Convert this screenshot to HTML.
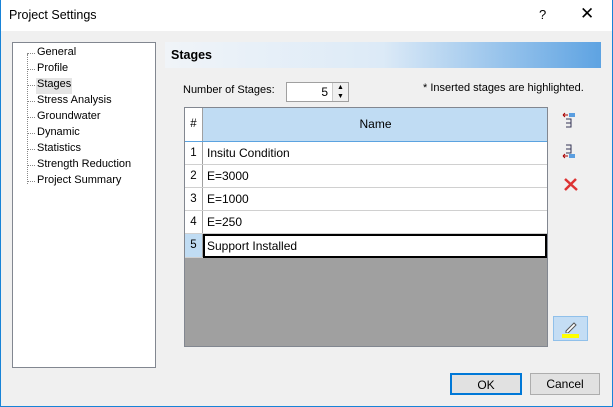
<html><head><style>
*{box-sizing:border-box}
body{margin:0;width:613px;height:407px;overflow:hidden;font-family:"Liberation Sans",sans-serif;font-size:11.5px;color:#000;background:#f0f0f0;position:relative}
.a{position:absolute}
.win{left:0;top:0;width:613px;height:407px;border:1px solid #1883d7;border-top:none}
.title{left:0;top:0;width:613px;height:31px;background:#fff;border-left:1px solid #1883d7;border-right:1px solid #1883d7}
.tree{left:12px;top:42px;width:144px;height:326px;background:#fff;border:1px solid #828790}
.ti{position:absolute;left:24px;font-size:11px}
.ti:before{content:"";position:absolute;left:-10px;top:7px;width:8px;border-top:1px dotted #888}
.tbl{left:184px;top:107px;width:364px;height:240px;background:#a0a0a0;border:1px solid #828790}
.row{position:absolute;left:0;width:362px;height:23px;border-bottom:1px solid #d0d0d0;background:#fff}
.num{position:absolute;left:0;top:0;width:18px;height:22px;border-right:1px solid #a0a0a0;text-align:center;line-height:22px;background:#fff}
.nm{position:absolute;left:22px;top:0;line-height:22px;font-size:12px}
.btn{height:22px;border:1px solid #adadad;background:#e1e1e1;text-align:center;line-height:20px;font-size:12px}
</style></head><body>
<div class="a win"></div>
<div class="a title"></div>
<div class="a" style="left:9px;top:8px;font-size:12.5px">Project Settings</div>
<div class="a" style="left:539px;top:7px;font-size:13px">?</div>
<div class="a" style="left:580px;top:4px;font-size:17px">✕</div>
<div class="a tree">
<div class="a" style="left:14px;top:11px;height:130px;border-left:1px dotted #888"></div>
<div class="ti" style="top:3px">General</div>
<div class="ti" style="top:19px">Profile</div>
<div class="a" style="left:23px;top:35px;width:36px;height:16px;background:#e5e5e5"></div>
<div class="ti" style="top:35px">Stages</div>
<div class="ti" style="top:51px">Stress Analysis</div>
<div class="ti" style="top:67px">Groundwater</div>
<div class="ti" style="top:83px">Dynamic</div>
<div class="ti" style="top:99px">Statistics</div>
<div class="ti" style="top:115px">Strength Reduction</div>
<div class="ti" style="top:131px">Project Summary</div>
</div>
<div class="a" style="left:165px;top:42px;width:436px;height:26px;background:linear-gradient(90deg,#f0f4f8 0%,#dceaf7 50%,#5ea3e2 100%)"></div>
<div class="a" style="left:171px;top:48px;font-weight:bold;font-size:12.5px">Stages</div>
<div class="a" style="left:183px;top:84px;font-size:11px">Number of Stages:</div>
<div class="a" style="left:286px;top:82px;width:63px;height:20px;border:1px solid #a0a0a0;background:#fff"><span class="a" style="right:20px;top:2px;font-size:12px">5</span><div class="a" style="right:0;top:0;width:16px;height:18px;background:#f0f0f0;border-left:1px solid #ccc;font-size:7px;text-align:center;line-height:9px">▲<br>▼</div></div>
<div class="a" style="left:423px;top:82px;font-size:11px">* Inserted stages are highlighted.</div>
<div class="a tbl">
<div class="row" style="top:0;height:34px;background:#c0dcf3;border-bottom:1px solid #5ba3e0"><div class="num" style="height:33px;line-height:33px;background:#fff">#</div><div class="a" style="left:19px;width:343px;text-align:center;line-height:33px;font-size:12px">Name</div></div>
<div class="row" style="top:34px"><div class="num">1</div><div class="nm">Insitu Condition</div></div>
<div class="row" style="top:57px"><div class="num">2</div><div class="nm">E=3000</div></div>
<div class="row" style="top:80px"><div class="num">3</div><div class="nm">E=1000</div></div>
<div class="row" style="top:103px"><div class="num">4</div><div class="nm">E=250</div></div>
<div class="row" style="top:126px;height:24px"><div class="num" style="background:#c0dcf3;height:23px">5</div><div class="a" style="left:18px;top:0;width:344px;height:24px;border:2px solid #000"></div><div class="nm" style="left:22px;top:1px">Support Installed</div></div>
</div>
<svg class="a" style="left:562px;top:112px" width="14" height="16"><path d="M1 3h5M1 3l2-2M1 3l2 2" stroke="#a00" fill="none"/><rect x="7" y="1" width="6" height="4" fill="#5a9ee0"/><path d="M4 7h5v8H4M4 11h5" stroke="#335" fill="none"/></svg>
<svg class="a" style="left:562px;top:144px" width="14" height="16"><path d="M4 1h5v8H4M4 5h5" stroke="#335" fill="none"/><path d="M1 12h5M1 12l2-2M1 12l2 2" stroke="#a00" fill="none"/><rect x="7" y="10" width="6" height="4" fill="#5a9ee0"/></svg>
<svg class="a" style="left:563px;top:177px" width="16" height="15"><path d="M2 2L14 13M13 2L2 13" stroke="#d33" stroke-width="2.5"/></svg>
<div class="a" style="left:553px;top:316px;width:35px;height:25px;background:#c4ddf4;border:1px solid #90c0ea"></div>
<div class="a" style="left:562px;top:334px;width:17px;height:4px;background:#ff0"></div>
<svg class="a" style="left:563px;top:320px" width="14" height="13"><path d="M3 11L11 3l2 2-8 8H3z" fill="#fff" stroke="#555"/></svg>
<div class="a btn" style="left:450px;top:373px;width:72px;border:2px solid #0078d7">OK</div>
<div class="a btn" style="left:530px;top:373px;width:70px">Cancel</div>
</body></html>
